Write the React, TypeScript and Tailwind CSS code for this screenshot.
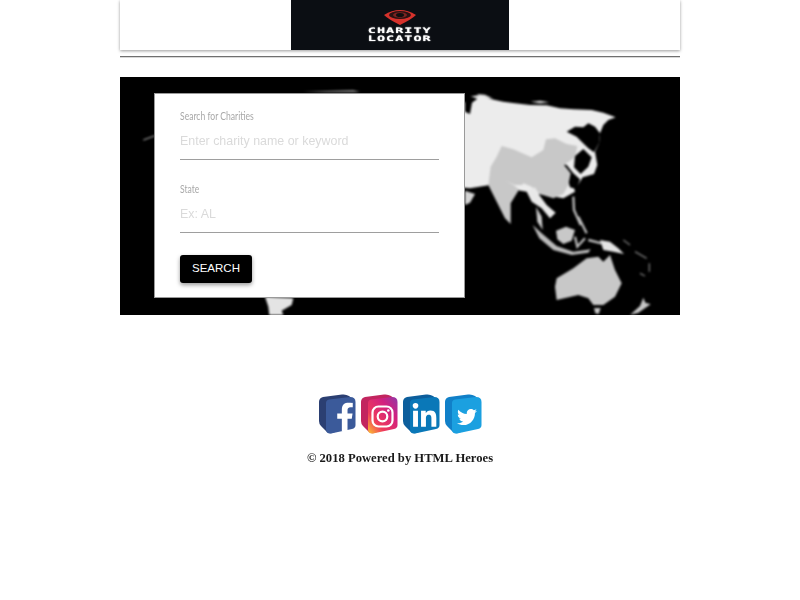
import { FaFacebookF, FaLinkedinIn, FaTwitter } from 'react-icons/fa'

const BACK =
  'M1 8 Q1 4 5 3 L24 0.5 Q28 0 31 2 L36 6 L36 32 L14 39 Q11 40 9 38 L3 32 Q1 30 1 27 Z'
const FRONT =
  'M8 9 Q8 6 11 5.5 L32 3 Q37.5 3 37.5 8 L37.5 31 Q37.5 34 34 35 L13 39.5 Q8 40 8 35 Z'

const WorldMap = () => (
  <svg
    className="absolute inset-0 blur-[0.8px]"
    width="560"
    height="238"
    viewBox="-1020 21 1680 714"
  >
    <path d="M-950 210 L-915 197" stroke="#bbb" strokeWidth="3" />
    <path
      d="M-585 680 L-500 685 L-505 705 L-535 722 L-530 735 L-572 735 L-575 710 Z"
      fill="#e4e4e4"
    />
    <path d="M-470 66 L-300 66 L-320 61 L-400 63 Z" fill="#999" />
    <path d="M50 72 L75 74 L100 86 L70 82 Z" fill="#ddd" />
    <path d="M212 95 L240 92 L268 97 L240 100 Z" fill="#ddd" />
    <path
      d="M-20 110 L15 95 L25 80 L60 75 L95 88 L130 95 L165 100 L210 105 L260 106 L300 115 L340 118 L395 120 L430 128 L467 142 L445 150 L430 165 L420 190 L417 220 L405 245 L412 285 L402 312 L368 322 L352 348 L338 335 L345 365 L310 385 L200 365 L90 345 L30 355 L-20 350 Z"
      fill="#ececec"
    />
    <path d="M15 72 L52 86 L36 98 L30 132 L15 125 Z" fill="#000" />
    <path
      d="M320 185 L345 170 L370 172 L385 160 L405 170 L420 190 L417 220 L402 247 L385 235 L365 215 L350 200 Z"
      fill="#000"
    />
    <path
      d="M345 258 L370 237 L395 262 L385 290 L362 312 L342 292 Z"
      fill="#000"
    />
    <path d="M298 280 L320 285 L340 310 L360 328 L350 358 L330 352 L318 310 Z" fill="#000" />
    <path
      d="M125 228 L160 238 L215 262 L250 240 L258 208 L285 205 L320 222 L352 228 L345 262 L312 285 L332 310 L325 345 L310 372 L280 385 L258 378 L240 372 L215 350 L190 340 L175 362 L152 400 L152 462 L135 445 L115 405 L95 365 L85 345 L92 290 L110 260 Z"
      fill="#c8c8c8"
    />
    <path d="M135 332 L165 345 L190 345 L182 362 L160 345 Z" fill="#ececec" />
    <path
      d="M200 365 L225 352 L240 378 L260 405 L287 428 L270 445 L245 415 L215 395 Z"
      fill="#e8e8e8"
    />
    <path d="M15 362 L45 372 L30 398 L15 405 Z" fill="#d4d4d4" />
    <path d="M228 410 L245 440 L248 480 L232 455 Z" fill="#c8c8c8" />
    <path
      d="M218 465 L245 490 L290 528 L340 545 L392 538 L385 548 L335 555 L280 540 L238 505 Z"
      fill="#bbb"
    />
    <path d="M288 482 L318 470 L345 480 L335 512 L310 522 L292 508 Z" fill="#c8c8c8" />
    <path
      d="M340 380 L342 420 L362 465 M355 440 L380 490 M345 500 L352 530 L375 505 M385 510 L425 520"
      stroke="#bbb"
      strokeWidth="7"
      fill="none"
    />
    <path d="M420 510 L450 515 L475 535 L492 552 L460 545 L430 540 Z" fill="#e4e4e4" />
    <path
      d="M490 510 L510 525 M525 545 L560 565 M568 580 L568 605 M540 610 L555 618"
      stroke="#777"
      strokeWidth="4"
      fill="none"
    />
    <path
      d="M290 625 L340 595 L380 565 L415 560 L430 575 L450 555 L465 600 L485 640 L465 680 L430 705 L400 705 L385 685 L355 675 L290 690 L285 650 Z"
      fill="#c8c8c8"
    />
    <path d="M402 714 L422 714 L416 732 L406 730 Z" fill="#c8c8c8" />
    <path d="M550 683 L556 698 L572 703 L535 728 L510 735 L540 708 Z" fill="#c8c8c8" />
  </svg>
)

const Logo = () => (
  <div className="flex h-[50px] w-[218px] flex-col items-center bg-[#0b0e13] pt-[10px] blur-[0.4px]">
    <svg width="32" height="15" viewBox="0 0 32 15" className="shrink-0">
      <path d="M0 5 Q16 -5 32 5 Q28 9 16 15 Q4 9 0 5 Z" fill="#d6322c" />
      <ellipse cx="16" cy="5" rx="11" ry="4" fill="#2a1212" />
      <ellipse cx="16" cy="5" rx="7" ry="2.8" fill="#7a2320" />
      <ellipse cx="16" cy="5" rx="4" ry="2" fill="#0f0f0f" />
    </svg>
    <div className="mt-[2px] scale-x-[1.8] text-center font-['DejaVu_Sans_Mono',monospace] text-[7.5px] leading-[7.5px] font-bold tracking-[0.55px] text-white [text-shadow:0_0_1px_#fff]">
      <div>CHARITY</div>
      <div>LOCATOR</div>
    </div>
  </div>
)

type FieldProps = { label: string; placeholder: string; className?: string }

const Field = ({ label, placeholder, className }: FieldProps) => (
  <div className={className}>
    <label className="block origin-left scale-x-[0.78] font-['Lato',sans-serif] text-[11px] leading-[12px] text-[#a8a8a8]">
      {label}
    </label>
    <div className="mt-[6px] h-[32px] border-b border-[#9e9e9e] pt-[4px] font-['Liberation_Sans',sans-serif] text-[#dadada]">
      <div className="origin-left scale-x-[0.92] text-[13.5px] leading-[18px]">{placeholder}</div>
    </div>
  </div>
)

type SocialProps = { back: string; front: string; children: React.ReactNode }

const Social = ({ back, front, children }: SocialProps) => (
  <svg width="38" height="40" viewBox="0 0 38 40">
    <path d={BACK} fill={back} />
    <path d={FRONT} fill={front} />
    {children}
  </svg>
)

const App = () => {
  return (
    <div className="min-h-[600px] bg-white">
      <div className="mx-auto w-[560px]">
        <header className="flex h-[50px] justify-center bg-white shadow-[0_1px_3px_rgba(0,0,0,0.4)]">
          <Logo />
        </header>
        <hr className="mt-[6px] h-[2px] border-t border-b border-t-[#6f6f6f] border-b-[#d8d8d8]" />
        <section className="relative mt-[19px] h-[238px] overflow-hidden bg-black pt-4 pl-[34px]">
          <WorldMap />
          <form className="relative h-[205px] w-[311px] border border-[#9a9a9a] bg-white pt-[16px] pr-[25px] pl-[25px]">
            <Field label="Search for Charities" placeholder="Enter charity name or keyword" />
            <Field label="State" placeholder="Ex: AL" className="mt-[23px]" />
            <button
              type="button"
              className="mt-[22px] h-[28px] w-[72px] rounded-[3px] bg-black font-['Liberation_Sans',sans-serif] text-[11.5px] text-white shadow-[0_2px_4px_rgba(0,0,0,0.4)]"
            >
              SEARCH
            </button>
          </form>
        </section>
      </div>
      <div className="mt-[79px] flex justify-center gap-[4px]">
        <Social back="#2b3f72" front="#3b5a9a">
          <FaFacebookF x="12.5" y="8.5" size="29" color="#fff" />
        </Social>
        <Social back="#c2255f" front="url(#ig)">
          <defs>
            <linearGradient id="ig" x1="0" y1="1" x2="1" y2="0">
              <stop offset="0" stopColor="#fdc52f" />
              <stop offset="0.3" stopColor="#ee3a5c" />
              <stop offset="0.7" stopColor="#d11f80" />
              <stop offset="1" stopColor="#8f3aa8" />
            </linearGradient>
          </defs>
          <rect x="12.5" y="12.5" width="20" height="20" rx="6" fill="none" stroke="#fff" strokeWidth="2.2" />
          <circle cx="22.5" cy="22.5" r="4.8" fill="none" stroke="#fff" strokeWidth="2.2" />
          <circle cx="28.3" cy="16.5" r="1.3" fill="#fff" />
        </Social>
        <Social back="#0c5e9c" front="#0a78b8">
          <FaLinkedinIn x="9" y="9" size="27" color="#fff" />
        </Social>
        <Social back="#1180c8" front="#1ba0e0">
          <FaTwitter x="13" y="13" size="20" color="#fff" />
        </Social>
      </div>
      <p className="mt-[15px] scale-x-[0.95] text-center font-['Liberation_Serif',serif] text-[13.3px] leading-[17px] font-bold text-[#1a1a1a]">
        © 2018 Powered by HTML Heroes
      </p>
    </div>
  )
}

export default App
